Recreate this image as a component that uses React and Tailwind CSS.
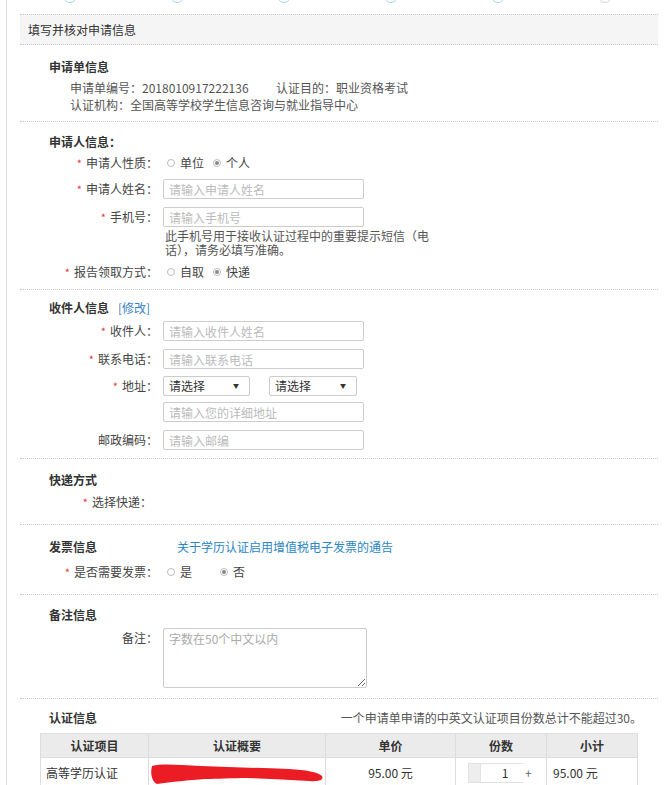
import React from 'react';

const Star = () => <span className="text-[#e4393c] mr-[4px] text-[11px]">*</span>;

const Radio = ({ checked, label, className = '' }) => (
  <span className={`inline-flex items-center ${className}`}>
    <span className="w-[8px] h-[8px] rounded-full border border-[#bdbdbd] flex items-center justify-center shrink-0">
      {checked && <span className="w-[4px] h-[4px] rounded-full bg-[#8a8a8a]" />}
    </span>
    <span className="ml-[5px] text-[#444]">{label}</span>
  </span>
);

const Field = ({ placeholder }) => (
  <input
    readOnly
    placeholder={placeholder}
    className="w-[201px] h-[20px] border border-[#ccc] rounded-[2px] px-[5px] text-[12px] bg-white placeholder:text-[#bbb] outline-none"
  />
);

const Label = ({ star, children, width = 'w-[143px]' }) => (
  <div className={`${width} shrink-0 text-right pr-[5px] text-[#444]`}>
    {star && <Star />}
    {children}
  </div>
);

const Select = ({ className = '' }) => (
  <div className={`h-[20px] border border-[#ccc] rounded-[2px] bg-white flex items-center justify-between pl-[5px] pr-[10px] text-[#333] ${className}`}>
    <span>请选择</span>
    <span className="text-[6px] text-[#333]">▼</span>
  </div>
);

const steps = ['#a8d3f3', '#a8d3f3', '#a8d3f3', '#a8d3f3', '#a8d3f3', '#d6d6d6'];

export default function App() {
  return (
    <div className="w-[666px] h-[785px] overflow-hidden bg-white pl-[6px] text-[12px] leading-[16px] text-[#444] font-['Noto_Sans_CJK_SC','Noto_Sans',sans-serif]">
      <div className="h-full border-l border-[#ddd] pl-[13px] pr-[8px]">
        {/* step indicators, cut off at the top */}
        <div className="h-[14px] overflow-hidden flex ml-[-4px]">
          {steps.map((c, i) => (
            <div key={i} className="w-[108px] flex justify-center">
              <div className="w-[14px] h-[14px] rounded-full border-[1.5px] mt-[-11px]" style={{ borderColor: c }} />
            </div>
          ))}
        </div>

        <div className="h-[31px] border-y border-dotted border-[#c8c8c8] bg-[#f5f5f5] flex items-center pl-[8px] text-[#333]">
          填写并核对申请信息
        </div>

        {/* 申请单信息 */}
        <div className="border-b border-dotted border-[#c8c8c8] pt-[14px] pb-[8px]">
          <div className="pl-[29px] font-bold text-[#333]">申请单信息</div>
          <div className="pl-[50px] mt-[4px] leading-[17px] text-[#555]">
            <div className="flex">
              <span className="w-[206px]">申请单编号：2018010917222136</span>
              <span>认证目的：职业资格考试</span>
            </div>
            <div>认证机构：全国高等学校学生信息咨询与就业指导中心</div>
          </div>
        </div>

        {/* 申请人信息 */}
        <div className="border-b border-dotted border-[#c8c8c8] pt-[12px] pb-[7px]">
          <div className="pl-[29px] font-bold text-[#333]">申请人信息：</div>
          <div className="flex items-center h-[20px] mt-[3px]">
            <Label star>申请人性质：</Label>
            <Radio label="单位" className="w-[46px] ml-[4px]" />
            <Radio checked label="个人" />
          </div>
          <div className="flex items-center h-[20px] mt-[6px]">
            <Label star>申请人姓名：</Label>
            <Field placeholder="请输入申请人姓名" />
          </div>
          <div className="flex items-center h-[20px] mt-[8px]">
            <Label star>手机号：</Label>
            <Field placeholder="请输入手机号" />
          </div>
          <div className="pl-[145px] mt-[2px] leading-[14px] text-[#555]">
            此手机号用于接收认证过程中的重要提示短信（电
            <br />
            话），请务必填写准确。
          </div>
          <div className="flex items-center h-[20px] mt-[5px]">
            <Label star>报告领取方式：</Label>
            <Radio label="自取" className="w-[46px] ml-[4px]" />
            <Radio checked label="快递" />
          </div>
        </div>

        {/* 收件人信息 */}
        <div className="border-b border-dotted border-[#c8c8c8] pt-[10px] pb-[8px]">
          <div className="pl-[29px]">
            <span className="font-bold text-[#333]">收件人信息</span>
            <span className="ml-[9px] text-[#3a7fc6]">[修改]</span>
          </div>
          <div className="flex items-center h-[20px] mt-[5px]">
            <Label star>收件人：</Label>
            <Field placeholder="请输入收件人姓名" />
          </div>
          <div className="flex items-center h-[20px] mt-[8px]">
            <Label star>联系电话：</Label>
            <Field placeholder="请输入联系电话" />
          </div>
          <div className="flex items-center h-[20px] mt-[7px]">
            <Label star>地址：</Label>
            <Select className="w-[87px]" />
            <Select className="w-[88px] ml-[19px]" />
          </div>
          <div className="flex items-center h-[20px] mt-[6px]">
            <Label />
            <Field placeholder="请输入您的详细地址" />
          </div>
          <div className="flex items-center h-[20px] mt-[8px]">
            <Label>邮政编码：</Label>
            <Field placeholder="请输入邮编" />
          </div>
        </div>

        {/* 快递方式 */}
        <div className="border-b border-dotted border-[#c8c8c8] pt-[13px] pb-[14px]">
          <div className="pl-[29px] font-bold text-[#333]">快递方式</div>
          <div className="flex mt-[6px]">
            <Label star width="w-[137px]">选择快递：</Label>
          </div>
        </div>

        {/* 发票信息 */}
        <div className="border-b border-dotted border-[#c8c8c8] pt-[14px] pb-[14px]">
          <div className="pl-[29px] flex">
            <span className="w-[128px] font-bold text-[#333]">发票信息</span>
            <span className="text-[#2a86c4]">关于学历认证启用增值税电子发票的通告</span>
          </div>
          <div className="flex items-center mt-[9px]">
            <Label star>是否需要发票：</Label>
            <Radio label="是" className="w-[53px] ml-[4px]" />
            <Radio checked label="否" />
          </div>
        </div>

        {/* 备注信息 */}
        <div className="border-b border-dotted border-[#c8c8c8] pt-[12px] pb-[10px]">
          <div className="pl-[29px] font-bold text-[#333]">备注信息</div>
          <div className="flex items-start mt-[5px]">
            <div className="pt-[2px]">
              <Label>备注：</Label>
            </div>
            <textarea
              readOnly
              placeholder="字数在50个中文以内"
              className="w-[204px] h-[60px] border border-[#ccc] rounded-[2px] px-[5px] py-[2px] text-[12px] leading-[16px] placeholder:text-[#aaa] outline-none resize"
            />
          </div>
        </div>

        {/* 认证信息 */}
        <div className="pt-[11px]">
          <div className="flex justify-between pl-[29px] pr-[16px]">
            <span className="font-bold text-[#333]">认证信息</span>
            <span className="text-[#555]">一个申请单申请的中英文认证项目份数总计不能超过30。</span>
          </div>
          <table className="ml-[20px] mt-[7px] w-[597px] table-fixed border-collapse">
            <colgroup>
              <col className="w-[108px]" />
              <col className="w-[177px]" />
              <col className="w-[130px]" />
              <col className="w-[91px]" />
              <col className="w-[91px]" />
            </colgroup>
            <thead>
              <tr className="h-[24px] bg-[#ebebeb] text-[#333] font-bold">
                <th className="border border-[#ddd] font-bold">认证项目</th>
                <th className="border border-[#ddd] font-bold">认证概要</th>
                <th className="border border-[#ddd] font-bold">单价</th>
                <th className="border border-[#ddd] font-bold">份数</th>
                <th className="border border-[#ddd] font-bold">小计</th>
              </tr>
            </thead>
            <tbody>
              <tr className="h-[30px] text-[#333]">
                <td className="border border-[#ddd] pl-[5px]">高等学历认证</td>
                <td className="border border-[#ddd] p-0">
                  <svg width="176" height="26" viewBox="0 0 176 26" className="block">
                    <path
                      d="M3 6 C 14 3, 30 5, 52 6 C 80 7, 110 8, 140 9 C 158 10, 168 12, 173 16 C 175 20, 170 22, 160 21 C 140 20, 120 19, 100 18 C 80 18, 70 19, 56 19 C 40 20, 22 22, 8 24 C 3 22, 1 14, 3 6 Z"
                      fill="#ec1c24"
                    />
                  </svg>
                </td>
                <td className="border border-[#ddd] text-center">95.00 元</td>
                <td className="border border-[#ddd] pl-[12px]">
                  <div className="flex items-center h-[20px]">
                    <div className="w-[13px] h-[20px] bg-[#eee] border border-[#e2e2e2]" />
                    <div className="w-[42px] h-[20px] border-y border-[#e2e2e2] flex items-center justify-center pl-[6px]">1</div>
                    <div className="ml-[2px] text-[#666]">+</div>
                  </div>
                </td>
                <td className="border border-[#ddd] pl-[6px]">95.00 元</td>
              </tr>
            </tbody>
          </table>
        </div>
      </div>
    </div>
  );
}
